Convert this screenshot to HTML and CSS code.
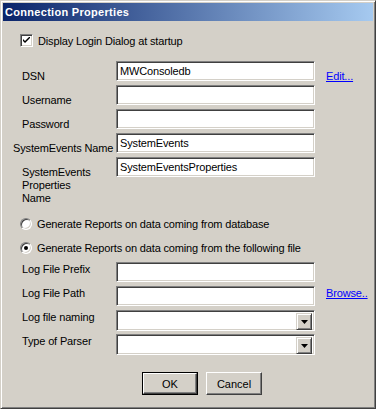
FILE: index.html
```html
<!DOCTYPE html>
<html>
<head>
<meta charset="utf-8">
<link rel="stylesheet" href="styles.css">
</head>
<body>
<div class="window">
  <div class="titlebar"><span class="title">Connection Properties</span></div>
  <div class="content">
    <div class="check-row">
      <span class="checkbox">
        <svg width="7" height="7" viewBox="0 0 7 7"><path d="M0 2 L0 4 L2 6 L7 1 L7 -1 L2 4 Z" fill="#000"/></svg>
      </span>
      <span class="opt-text">Display Login Dialog at startup</span>
    </div>

    <div class="form form-db">
      <label class="lbl">DSN</label>
      <div class="field">MWConsoledb</div>
      <a class="link" href="#">Edit...</a>

      <label class="lbl">Username</label>
      <div class="field"></div>
      <span></span>

      <label class="lbl">Password</label>
      <div class="field"></div>
      <span></span>

      <label class="lbl lbl-wide">SystemEvents Name</label>
      <div class="field">SystemEvents</div>
      <span></span>

      <label class="lbl lbl-multi">SystemEvents<br>Properties<br>Name</label>
      <div class="field">SystemEventsProperties</div>
      <span></span>
    </div>

    <div class="radio-row first">
      <span class="radio"></span>
      <span class="opt-text">Generate Reports on data coming from database</span>
    </div>
    <div class="radio-row">
      <span class="radio checked"><span class="dot"></span></span>
      <span class="opt-text">Generate Reports on data coming from the following file</span>
    </div>

    <div class="form form-log">
      <label class="lbl">Log File Prefix</label>
      <div class="field"></div>
      <span></span>

      <label class="lbl">Log File Path</label>
      <div class="field"></div>
      <a class="link" href="#">Browse..</a>

      <label class="lbl">Log file naming</label>
      <div class="field combo"><span class="drop"><svg width="7" height="4" viewBox="0 0 7 4"><path d="M0 0 H7 L3.5 4 Z" fill="#000"/></svg></span></div>
      <span></span>

      <label class="lbl">Type of Parser</label>
      <div class="field combo"><span class="drop"><svg width="7" height="4" viewBox="0 0 7 4"><path d="M0 0 H7 L3.5 4 Z" fill="#000"/></svg></span></div>
      <span></span>
    </div>

    <div class="buttons">
      <button class="btn default"><span class="btn-inner">OK</span></button>
      <button class="btn"><span class="btn-inner">Cancel</span></button>
    </div>
  </div>
</div>
</body>
</html>
```
FILE: styles.css
```css
* { box-sizing: border-box; }
html, body {
  margin: 0;
  padding: 0;
  background: #d4d0c8;
}
body {
  font-family: "Liberation Sans", Arial, sans-serif;
  font-size: 11px;
  letter-spacing: -0.15px;
  color: #000;
}
.window {
  width: 376px;
  height: 409px;
  background: #d4d0c8;
  border-top: 1px solid #d4d0c8;
  border-left: 1px solid #d4d0c8;
  border-right: 1px solid #404040;
  border-bottom: 1px solid #404040;
  box-shadow: inset 1px 1px 0 #ffffff, inset -1px -1px 0 #808080;
  padding: 2px;
  overflow: hidden;
}
.titlebar {
  height: 18px;
  background: linear-gradient(to right, #0a246a, #a6caf0);
  display: flex;
  align-items: center;
  padding-left: 2px;
}
.title {
  color: #fff;
  font-weight: bold;
  font-size: 11px;
  letter-spacing: 0.3px;
}
.content {
  padding-left: 17px;
}
.check-row {
  display: flex;
  align-items: center;
  margin-top: 13px;
  height: 13px;
}
.checkbox {
  width: 13px;
  height: 13px;
  background: #fff;
  border-top: 1px solid #808080;
  border-left: 1px solid #808080;
  border-right: 1px solid #fff;
  border-bottom: 1px solid #fff;
  box-shadow: inset 1px 1px 0 #404040, inset -1px -1px 0 #d4d0c8;
  display: flex;
  align-items: center;
  justify-content: center;
  flex: none;
}
.opt-text {
  margin-left: 5px;
  white-space: nowrap;
}
.form {
  display: grid;
  grid-template-columns: 103px 199px auto;
  row-gap: 4px;
  margin-left: -7px;
}
.form-db {
  margin-top: 14px;
  grid-template-rows: 20px 20px 20px 20px auto;
}
.form-log {
  margin-top: 8px;
  grid-template-rows: 20px 20px 20px 20px;
}
.lbl {
  line-height: 13px;
  padding-left: 9px;
  white-space: nowrap;
}
.form-db .lbl { padding-top: 9px; }
.form-db .lbl-wide { padding-left: 0; }
.form-db .lbl-multi { padding-top: 9px; }
.form-log .lbl { padding-top: 1px; }
.field {
  height: 20px;
  background: #fff;
  border-top: 1px solid #808080;
  border-left: 1px solid #808080;
  border-right: 1px solid #fff;
  border-bottom: 1px solid #fff;
  box-shadow: inset 1px 1px 0 #404040, inset -1px -1px 0 #d4d0c8;
  padding: 3px 3px 0 3px;
  line-height: 13px;
  white-space: nowrap;
  overflow: hidden;
}
.combo {
  height: 21px;
  display: flex;
  justify-content: flex-end;
  padding: 2px;
}
.drop {
  width: 16px;
  height: 17px;
  background: #d4d0c8;
  border-top: 1px solid #d4d0c8;
  border-left: 1px solid #d4d0c8;
  border-right: 1px solid #404040;
  border-bottom: 1px solid #404040;
  box-shadow: inset 1px 1px 0 #fff, inset -1px -1px 0 #808080;
  display: flex;
  align-items: center;
  justify-content: center;
}
.link {
  color: #0000ff;
  text-decoration: underline;
  line-height: 13px;
  white-space: nowrap;
  margin-left: 11px;
}
.form-db .link { padding-top: 9px; }
.form-log .link { padding-top: 1px; }
.radio-row {
  display: flex;
  align-items: center;
  height: 12px;
  margin-top: 12px;
}
.radio-row.first { margin-top: 13px; }
.radio {
  width: 12px;
  height: 12px;
  border-radius: 50%;
  background: #fff;
  border: 1px solid;
  border-color: #808080 #fff #fff #808080;
  box-shadow: inset 1px 1px 0 #404040, inset -1px -1px 0 #d4d0c8;
  display: flex;
  align-items: center;
  justify-content: center;
  flex: none;
}
.dot {
  width: 4px;
  height: 4px;
  border-radius: 50%;
  background: #000;
}
.buttons {
  display: flex;
  gap: 8px;
  margin-top: 18px;
  padding-left: 122px;
}
.btn {
  width: 56px;
  height: 23px;
  padding: 0;
  margin: 0;
  font: inherit;
  color: #000;
  background: #d4d0c8;
  border-top: 1px solid #fff;
  border-left: 1px solid #fff;
  border-right: 1px solid #404040;
  border-bottom: 1px solid #404040;
  box-shadow: inset -1px -1px 0 #808080;
  display: flex;
}
.btn-inner {
  flex: 1;
  display: flex;
  align-items: center;
  justify-content: center;
}
.btn.default {
  border: 1px solid #000;
  box-shadow: none;
}
.btn.default .btn-inner {
  border-top: 1px solid #fff;
  border-left: 1px solid #fff;
  border-right: 1px solid #404040;
  border-bottom: 1px solid #404040;
  box-shadow: inset -1px -1px 0 #808080;
}
```
